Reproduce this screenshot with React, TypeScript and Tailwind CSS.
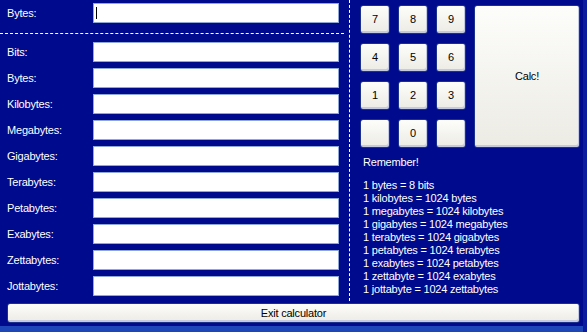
import React from 'react';

const units = [
  'Bits:',
  'Bytes:',
  'Kilobytes:',
  'Megabytes:',
  'Gigabytes:',
  'Terabytes:',
  'Petabytes:',
  'Exabytes:',
  'Zettabytes:',
  'Jottabytes:',
];

const facts = [
  '1 bytes = 8 bits',
  '1 kilobytes = 1024 bytes',
  '1 megabytes = 1024 kilobytes',
  '1 gigabytes = 1024 megabytes',
  '1 terabytes = 1024 gigabytes',
  '1 petabytes = 1024 terabytes',
  '1 exabytes = 1024 petabytes',
  '1 zettabyte = 1024 exabytes',
  '1 jottabyte = 1024 zettabytes',
];

const keys = ['7', '8', '9', '4', '5', '6', '1', '2', '3', '', '0', ''];

const btn =
  'flex items-center justify-center rounded-[3px] bg-gradient-to-b from-[#fdfdfb] to-[#ecebe4] text-black border border-[#1b2f8c] shadow-[inset_-1px_-2px_0_#c4cbe0]';

function Field({ caret }: { caret?: boolean }) {
  return (
    <div className="w-[246px] h-[20px] bg-white border border-[#8fa6d6] flex items-center pl-[2px]">
      {caret && <span className="w-px h-[12px] bg-black" />}
    </div>
  );
}

export default function App() {
  return (
    <div
      className="w-[587px] h-[332px] bg-[#000a8c] flex flex-col text-[11px] tracking-[-0.2px] text-white shadow-[inset_-4px_0_0_#0b1d9e,inset_0_-6px_0_#1d46b8]"
      style={{ fontFamily: '"Liberation Sans", Arial, sans-serif' }}
    >
      <div className="flex h-[301px]">
        {/* converter fields */}
        <div className="w-[344px] flex flex-col">
          <div className="h-[34px] border-b border-dashed border-white flex items-start pt-[3px]">
            <div className="w-[93px] pl-[7px] h-[20px] flex items-center">Bytes:</div>
            <Field caret />
          </div>
          <div className="flex flex-col gap-[6px] pt-[8px]">
            {units.map((u) => (
              <div key={u} className="flex items-center h-[20px]">
                <div className="w-[93px] pl-[7px]">{u}</div>
                <Field />
              </div>
            ))}
          </div>
        </div>

        <div className="ml-[5px] border-l border-dashed border-white" />

        {/* keypad and notes */}
        <div className="pl-[10px] pt-[5px] flex flex-col">
          <div className="flex gap-[8px]">
            <div className="grid grid-cols-[30px_30px_30px] auto-rows-[29px] gap-x-[8px] gap-y-[9px]">
              {keys.map((k, i) => (
                <div key={i} className={btn}>
                  {k}
                </div>
              ))}
            </div>
            <div className={`${btn} w-[106px] h-[143px]`}>Calc!</div>
          </div>
          <div className="pl-[3px] mt-[8px] leading-[13px]">
            <div>Remember!</div>
            <div className="mt-[10px]">
              {facts.map((f) => (
                <div key={f}>{f}</div>
              ))}
            </div>
          </div>
        </div>
      </div>

      <div className={`${btn} mx-[7px] mt-[2px] w-[573px] h-[20px]`}>Exit calculator</div>
    </div>
  );
}
